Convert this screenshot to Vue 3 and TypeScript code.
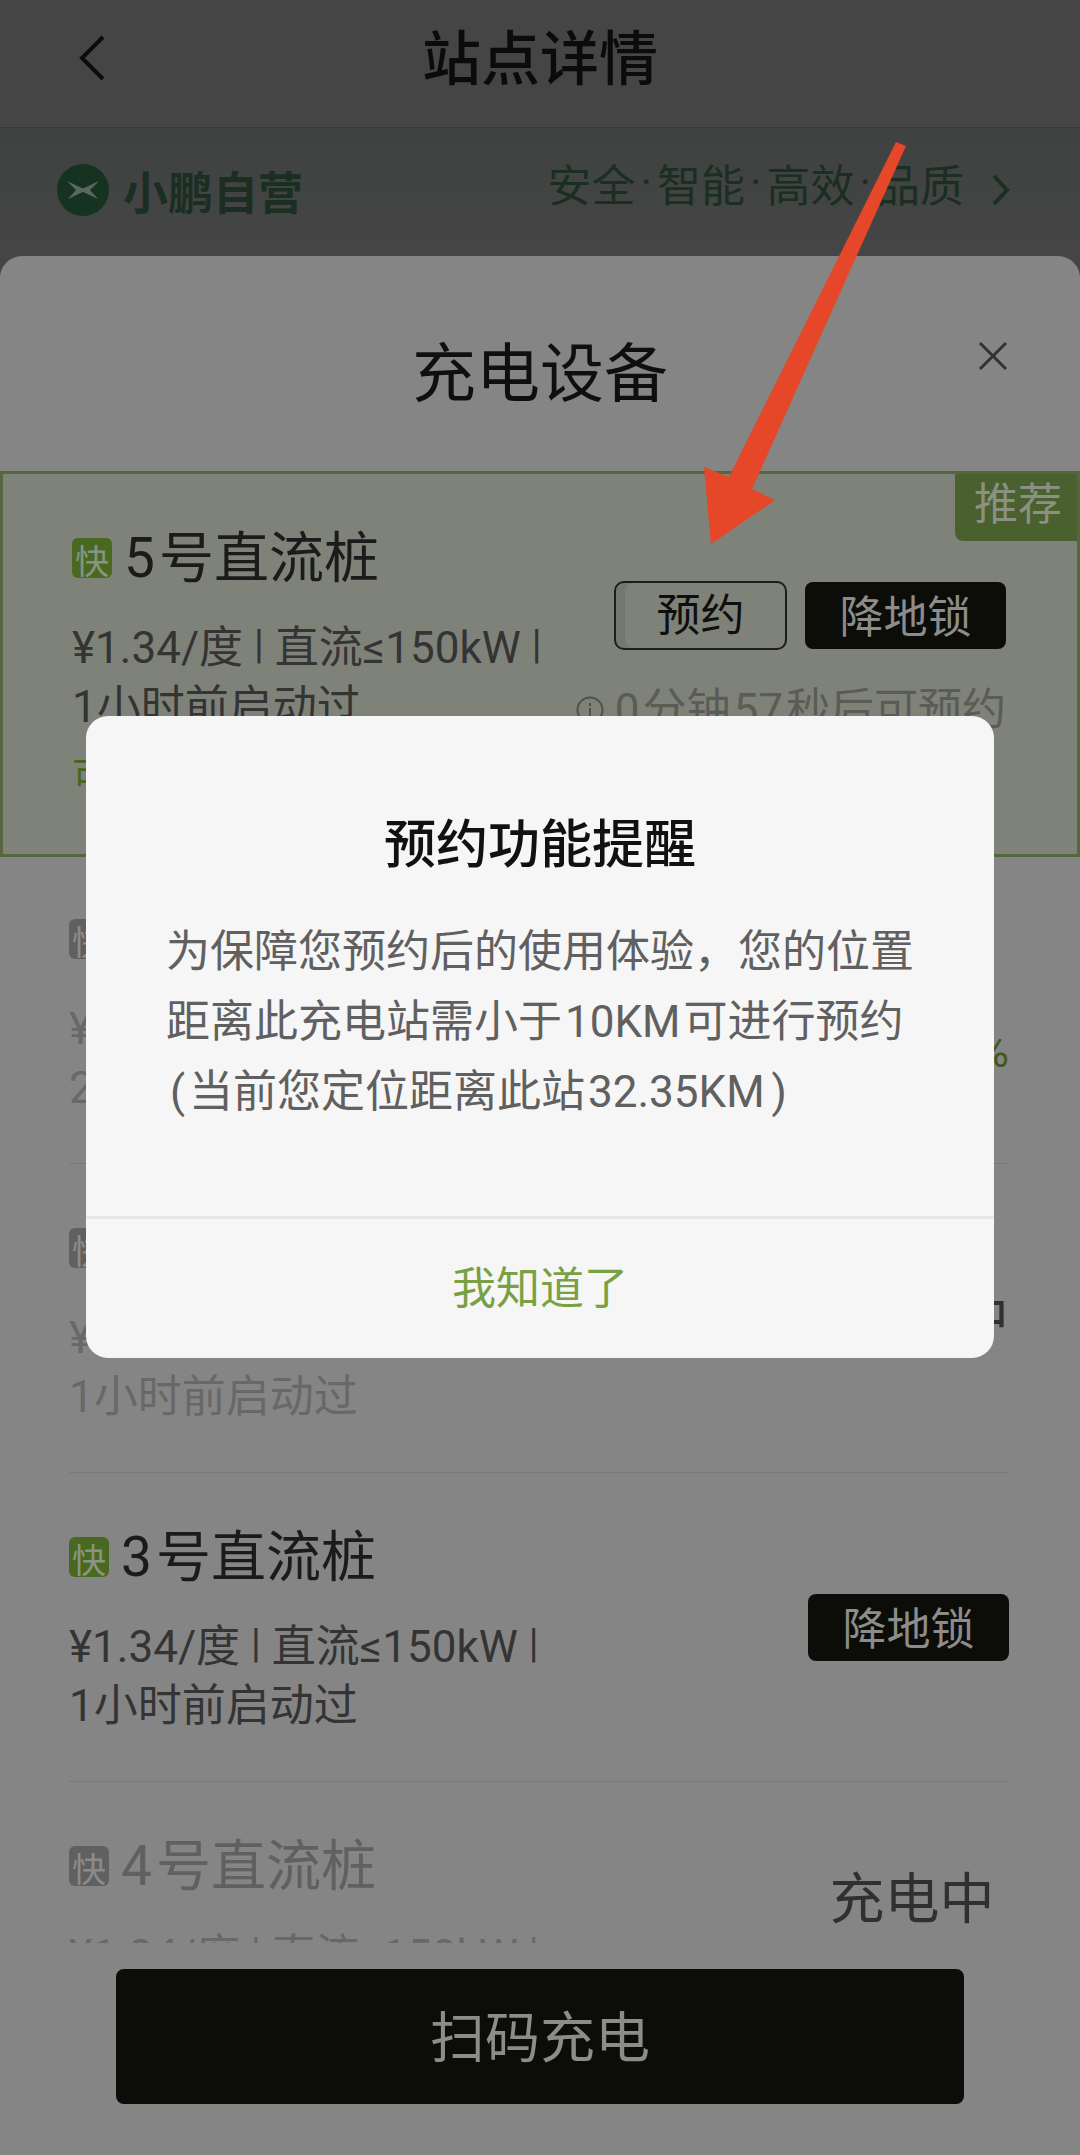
<script setup lang="ts">
interface Pile {
  id: number
  last: string
  state: 'reservable' | 'unlock' | 'charging' | 'busy'
  muted?: boolean
  level?: string
}

const slogans: string[] = ['安全', '智能', '高效', '品质']

const piles: Pile[] = [
  { id: 5, last: '1小时前启动过', state: 'reservable' },
  { id: 1, last: '2小时前启动过', state: 'charging', muted: true, level: '已充 96%' },
  { id: 2, last: '1小时前启动过', state: 'busy', muted: true },
  { id: 3, last: '1小时前启动过', state: 'unlock' },
  { id: 4, last: '1小时前启动过', state: 'charging', muted: true, level: '已充 62%' },
]
</script>

<template>
  <div class="app">
    <header class="nav">
      <button class="icon-btn back" aria-label="返回">
        <svg width="28" height="46" viewBox="0 0 28 46"><path d="M25 2 4 23l21 21" fill="none" stroke="#0b0b0b" stroke-width="4" /></svg>
      </button>
      <h1>站点详情</h1>
    </header>

    <a class="banner" href="#">
      <svg class="logo" width="52" height="52" viewBox="0 0 52 52">
        <circle cx="26" cy="26" r="26" fill="#163220" />
        <path d="M10 17 26 24.500 42 17 33 26l8 9-15-7-15 7 8-9z" fill="#5a675f" />
      </svg>
      <strong>小鹏自营</strong>
      <span class="slogans">
        <template v-for="(s, i) in slogans" :key="s">
          <span v-if="i > 0" class="dot">·</span>
          <span>{{ s }}</span>
        </template>
      </span>
      <svg width="20" height="34" viewBox="0 0 20 34"><path d="M3 3l13 14L3 31" fill="none" stroke="#1a2e22" stroke-width="4" /></svg>
    </a>

    <main class="sheet">
      <div class="sheet-head">
        <h2>充电设备</h2>
        <button class="icon-btn close" aria-label="关闭">
          <svg width="30" height="30" viewBox="0 0 30 30"><path d="M2 2l26 26M28 2 2 28" fill="none" stroke="#333" stroke-width="3" /></svg>
        </button>
      </div>

      <ul class="list">
        <li
          v-for="p in piles"
          :key="p.id"
          class="pile"
          :class="{ muted: p.muted, recommended: p.state === 'reservable' }"
        >
          <div class="info">
            <h3><span class="fast">快</span>{{ p.id }}<span class="name">号直流桩</span></h3>
            <p>¥1.34/度<span class="bar">|</span>直流≤150kW<span class="bar">|</span></p>
            <p>{{ p.last }}</p>
            <p v-if="p.state === 'reservable'" class="free">可用</p>
          </div>

          <div v-if="p.state === 'reservable'" class="side reserve">
            <div class="buttons">
              <button class="outline">预约</button>
              <button class="solid">降地锁</button>
            </div>
            <p class="wait">
              <svg width="28" height="28" viewBox="0 0 28 28">
                <circle cx="14" cy="14" r="12.500" fill="none" stroke="#4f524b" stroke-width="2" />
                <path d="M14 12v9M14 7v3" stroke="#4f524b" stroke-width="2" />
              </svg>
              <span><span class="num">0</span>分钟<span class="num">57</span>秒后可预约</span>
            </p>
          </div>
          <div v-else-if="p.state === 'unlock'" class="side">
            <button class="solid">降地锁</button>
          </div>
          <div v-else-if="p.state === 'charging'" class="side charging">
            <span class="status">充电中</span>
            <span class="level">{{ p.level }}</span>
          </div>
          <div v-else class="side"><span class="status">占用中</span></div>

          <span v-if="p.state === 'reservable'" class="tag">推荐</span>
        </li>
      </ul>

      <footer><button class="scan">扫码充电</button></footer>
    </main>

    <div class="mask">
      <section class="dialog" role="dialog" aria-modal="true" aria-labelledby="dialog-title">
        <h2 id="dialog-title">预约功能提醒</h2>
        <p>为保障您预约后的使用体验，您的位置距离此充电站需小于<span class="num">10KM</span>可进行预约<br /><span class="paren">(</span>当前您定位距离此站<span class="num">32.35KM</span><span class="paren">)</span></p>
        <button>我知道了</button>
      </section>
    </div>

    <svg class="arrow" width="202" height="402" viewBox="0 0 202 402" aria-hidden="true">
      <path d="M192 0 202 4 48 347l23 11L7 402 0 325l25 10z" fill="#e54728" />
    </svg>
  </div>
</template>

<style>
body {
  margin: 0;
  background: #454545;
}
</style>

<style scoped>
.app {
  position: relative;
  display: flex;
  flex-direction: column;
  height: 100vh;
  overflow: hidden;
  background: #454545;
  color: #1b1b1b;
  font-family: Roboto, 'Noto Sans CJK SC', sans-serif;
  font-size: 44px;
}

h1,
h2,
h3,
p,
ul {
  margin: 0;
  padding: 0;
  font-weight: 400;
}

button {
  margin: 0;
  padding: 0;
  border: 0;
  background: none;
  color: inherit;
  font: inherit;
}

svg {
  display: block;
  flex: none;
}

.nav {
  position: relative;
  flex: none;
  height: 127px;
  border-bottom: 1px solid #383838;
  text-align: center;
}

.nav h1 {
  color: #0b0b0b;
  font-size: 59px;
  font-weight: 500;
  line-height: 120px;
}

.icon-btn {
  position: absolute;
}

.back {
  left: 78px;
  top: 35px;
}

.banner {
  display: flex;
  flex: none;
  align-items: center;
  box-sizing: border-box;
  height: 128px;
  padding: 0 69px 4px 57px;
  background: linear-gradient(#3f4241, #454545);
  color: #1a2e22;
  text-decoration: none;
}

.banner strong {
  margin-left: 14px;
  font-size: 45px;
  font-weight: 700;
}

.slogans {
  display: flex;
  gap: 5px;
  margin: 0 27px 14px auto;
}

.dot {
  padding-top: 6px;
}

.sheet {
  display: flex;
  flex: 1;
  flex-direction: column;
  min-height: 0;
  border-radius: 22px 22px 0 0;
  background: #858585;
}

.sheet-head {
  position: relative;
  flex: none;
  height: 215px;
  text-align: center;
}

.sheet-head h2 {
  padding-top: 71px;
  color: #0f0f0f;
  font-size: 64px;
  line-height: 96px;
}

.close {
  right: 72px;
  top: 85px;
}

.list {
  flex: 1;
  min-height: 0;
  overflow-y: auto;
  scrollbar-width: none;
  list-style: none;
}

.pile {
  display: flex;
  align-items: center;
  justify-content: space-between;
  margin: 0 71px 0 69px;
  border-bottom: 1px solid #797979;
}

.pile.recommended {
  position: relative;
  align-items: flex-start;
  margin: 0 0 -2px;
  padding: 0 71px 0 69px;
  border: 3px solid #56663d;
  background: #7f8279;
}

.info {
  padding: 51px 0 45px;
  color: #343434;
}

.recommended .info {
  padding-bottom: 51px;
}

.info h3 {
  display: flex;
  align-items: center;
  margin-bottom: 28px;
  color: #1b1b1b;
  font-size: 55px;
  line-height: 66px;
}

.name {
  margin-left: 4px;
}

.fast {
  box-sizing: border-box;
  width: 40px;
  height: 40px;
  margin-right: 12px;
  padding-top: 4px;
  border-radius: 6px;
  background: #48691f;
  color: #8b9383;
  font-size: 34px;
  line-height: 40px;
  text-align: center;
}

.info p {
  line-height: 59px;
}

.bar {
  padding: 0 11px;
  font-size: 40px;
  vertical-align: 5px;
  line-height: 1;
}

.info .free {
  margin-top: 12px;
  color: #48651f;
  font-size: 38px;
  line-height: 54px;
}

.muted .info {
  color: #686868;
}

.muted .info h3 {
  color: #606060;
}

.muted .fast {
  background: #606060;
  color: #8b8b8b;
}

.side {
  text-align: right;
}

.reserve {
  padding-top: 107px;
}

.buttons {
  display: flex;
  align-items: center;
  justify-content: flex-end;
  gap: 18px;
}

.outline {
  box-sizing: border-box;
  width: 173px;
  height: 69px;
  border: 2px solid #1d1e1b;
  border-radius: 10px;
  box-shadow: inset 9px 0 #757870;
  color: #0f0f0f;
  line-height: 64px;
}

.solid {
  width: 201px;
  height: 67px;
  padding-top: 6px;
  border-radius: 8px;
  background: #0c0d09;
  color: #8c8c8a;
  line-height: 61px;
}

.wait {
  display: flex;
  align-items: center;
  justify-content: flex-end;
  gap: 8px;
  margin-top: 30px;
  color: #5a5c55;
  line-height: 60px;
}

.num {
  margin: 0 3px;
}

.paren {
  margin: 0 4px;
}

.charging {
  display: flex;
  flex-direction: column;
  min-width: 194px;
  padding-top: 6px;
}

.charging .status {
  text-align: center;
}

.status {
  color: #303030;
  font-size: 55px;
  line-height: 80px;
}

.level {
  color: #3f5a1b;
  line-height: 80px;
}

.tag {
  position: absolute;
  top: 0;
  right: 0;
  box-sizing: border-box;
  width: 122px;
  height: 67px;
  padding-left: 4px;
  border-radius: 0 0 0 8px;
  background: #4b602f;
  color: #8a9082;
  line-height: 62px;
  text-align: center;
}

footer {
  display: flex;
  flex: none;
  padding: 26px 116px 51px;
}

.scan {
  flex: 1;
  height: 135px;
  padding-bottom: 8px;
  border-radius: 8px;
  background: #0c0d09;
  color: #8c8c8a;
  font-size: 55px;
}

.mask {
  position: absolute;
  inset: 0;
  padding: 716px 86px 0;
}

.dialog {
  overflow: hidden;
  border-radius: 22px;
  background: #f6f6f6;
  text-align: center;
}

.dialog h2 {
  padding-top: 92px;
  color: #111;
  font-size: 52px;
  font-weight: 500;
  line-height: 76px;
}

.dialog p {
  padding: 33px 72px 89px 80px;
  color: #606060;
  line-height: 70px;
  text-align: left;
}

.dialog button {
  width: 100%;
  height: 142px;
  padding-bottom: 8px;
  border-top: 3px solid #e8e8e8;
  color: #79a043;
}

.arrow {
  position: absolute;
  left: 704px;
  top: 142px;
}
</style>
